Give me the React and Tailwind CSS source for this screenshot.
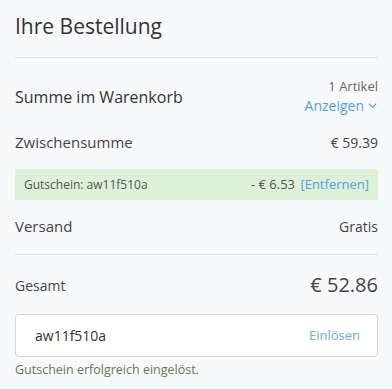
import React from "react";

const Row = ({ label, value, className = "" }) => (
  <div className={`flex justify-between items-center h-[20px] text-[#444] ${className}`}>
    <span className="text-[15px]">{label}</span>
    <span className="text-[14px]">{value}</span>
  </div>
);

const App = () => {
  return (
    <div
      className="w-[392px] h-[389px] bg-[#f8f9fb] pl-[15px] pr-[14px] overflow-hidden"
      style={{ fontFamily: "'Open Sans', 'Noto Sans', sans-serif" }}
    >
      <h2 className="pt-[12px] pb-[16px] text-[21px] leading-[29px] text-[#333]">Ihre Bestellung</h2>
      <div className="border-t border-[#dee0e3]" />

      <div className="flex justify-between items-center pt-[19px] h-[57px]">
        <span className="text-[16px] text-[#333] mt-[2px]">Summe im Warenkorb</span>
        <div className="flex flex-col items-end leading-[19px]">
          <span className="text-[13px] text-[#666]">1 Artikel</span>
          <button className="flex items-center gap-[3px] text-[14px] text-[#4fa3e0]">
            Anzeigen
            <svg width="11" height="11" viewBox="0 0 12 12" fill="none" stroke="#4fa3e0" strokeWidth="1.4">
              <path d="M2 4l4 4 4-4" />
            </svg>
          </button>
        </div>
      </div>

      <Row label="Zwischensumme" value="€ 59.39" className="mt-[17px]" />

      <div className="mt-[17px] h-[31px] bg-[#ddf0d8] flex items-center justify-between pl-[9px] pr-[9px] text-[13px] text-[#555]">
        <span className="text-[12px]">Gutschein: aw11f510a</span>
        <span>
          - € 6.53 <span className="ml-[2px] text-[#4fa3e0]">[Entfernen]</span>
        </span>
      </div>

      <Row label="Versand" value="Gratis" className="mt-[16px]" />

      <div className="mt-[18px] border-t border-[#dee0e3]" />

      <div className="flex justify-between items-center h-[28px] mt-[16px]">
        <span className="text-[14px] text-[#444]">Gesamt</span>
        <span className="text-[20px] text-[#444]">€ 52.86</span>
      </div>

      <div className="mt-[15px] h-[43px] bg-white border border-[#d4d6d9] rounded-[4px] flex items-center justify-between pl-[19px] pr-[17px]">
        <span className="text-[14px] text-[#333]">aw11f510a</span>
        <span className="text-[13px] text-[#6aaee3]">Einlösen</span>
      </div>

      <p className="mt-[4px] text-[12.5px] leading-[18px] text-[#5c7d52]">Gutschein erfolgreich eingelöst.</p>
    </div>
  );
};

export default App;
